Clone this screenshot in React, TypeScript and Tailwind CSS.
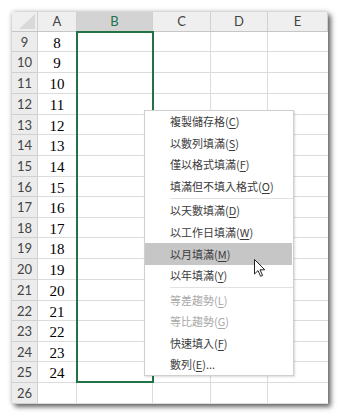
import React from "react";

const rowHeights = [20, 21, 21, 21, 20, 21, 21, 20, 21, 20, 21, 21, 21, 20, 21, 20, 21, 21];
const cols = [
  { w: "w-[39px]", label: "A" },
  { w: "w-[76px]", label: "B" },
  { w: "w-[58px]", label: "C" },
  { w: "w-[57px]", label: "D" },
  { w: "w-[60px]", label: "E" },
];

type Item = { text: string; key: string; tail?: string; h: string; disabled?: boolean; active?: boolean } | { sep: true };

const items: Item[] = [
  { text: "複製儲存格", key: "C", h: "h-[21px]" },
  { text: "以數列填滿", key: "S", h: "h-[22px]" },
  { text: "僅以格式填滿", key: "F", h: "h-[21px]" },
  { text: "填滿但不填入格式", key: "O", h: "h-[22px]" },
  { sep: true },
  { text: "以天數填滿", key: "D", h: "h-[21px]" },
  { text: "以工作日填滿", key: "W", h: "h-[22px]" },
  { text: "以月填滿", key: "M", h: "h-[22px]", active: true },
  { text: "以年填滿", key: "Y", h: "h-[21px]" },
  { sep: true },
  { text: "等差趨勢", key: "L", h: "h-[22px]", disabled: true },
  { text: "等比趨勢", key: "G", h: "h-[21px]", disabled: true },
  { text: "快速填入", key: "F", h: "h-[22px]" },
  { text: "數列", key: "E", tail: "...", h: "h-[21px]" },
];

function rowH(h: number) {
  return h === 20 ? "h-[20px]" : "h-[21px]";
}

export default function App() {
  return (
    <div className="w-[340px] h-[419px] bg-white pt-[12px] pl-[12px]">
      <div className="relative w-[316px] h-[392px] bg-white overflow-hidden shadow-[0_0_5px_rgba(0,0,0,0.25),3px_3px_5px_rgba(0,0,0,0.55)]">
        {/* header row */}
        <div className="flex h-[20px] bg-[#efefef] border-b border-[#c6c6c6]">
          <div className="w-[26px] h-full border-r border-[#d0d0d0] relative flex items-end justify-end pr-[2px] pb-[2px]">
            <svg width="16" height="15" viewBox="0 0 16 15">
              <polygon points="16,0 16,15 0,15" fill="#d9d9d9" />
            </svg>
          </div>
          {cols.map((c) => (
            <div
              key={c.label}
              className={`${c.w} h-full border-r border-[#d0d0d0] flex items-center justify-center text-[13px] ${
                c.label === "B" ? "bg-[#d3d3d3] text-[#217346]" : "text-[#444]"
              }`}
              style={{ fontFamily: "Lato, 'Open Sans', sans-serif" }}
            >
              {c.label}
            </div>
          ))}
        </div>
        {/* rows */}
        {rowHeights.map((h, i) => {
          const n = 9 + i;
          const val = n <= 25 ? String(n - 1) : "";
          return (
            <div key={n} className={`flex ${rowH(h)}`}>
              <div
                className="w-[26px] h-full bg-[#ececec] border-r border-b border-[#d0d0d0] flex items-center justify-center pt-[2px] text-[13px] text-[#444]"
                style={{ fontFamily: "Lato, 'Open Sans', sans-serif" }}
              >
                {n}
              </div>
              <div
                className="w-[39px] h-full border-r border-b border-[#dcdcdc] flex items-center justify-center pt-[3px] text-[15px] text-black"
                style={{ fontFamily: "'Liberation Serif', serif" }}
              >
                {val}
              </div>
              <div className="w-[76px] h-full border-r border-b border-[#dcdcdc]" />
              <div className="w-[58px] h-full border-r border-b border-[#dcdcdc]" />
              <div className="w-[57px] h-full border-r border-b border-[#dcdcdc]" />
              <div className="w-[60px] h-full border-b border-[#dcdcdc]" />
            </div>
          );
        })}

        {/* selection */}
        <div className="absolute left-[64px] top-[19px] w-[78px] h-[352px] border-2 border-[#217346]" />

        {/* context menu */}
        <div
          className="absolute left-[132px] top-[98px] w-[150px] bg-white border border-[#cfcfcf] shadow-[1px_1px_2px_rgba(0,0,0,0.15)] flex flex-col"
          style={{ fontFamily: "'Noto Sans CJK TC', 'Noto Sans', sans-serif" }}
        >
          {items.map((it, i) =>
            "sep" in it ? (
              <div key={i} className="h-[3px] flex items-center pl-[25px]">
                <div className="h-px w-full bg-[#e2e2e2]" />
              </div>
            ) : (
              <div
                key={i}
                className={`${it.h} flex items-center pl-[25px] text-[11px] mr-[1px] ${
                  it.active ? "bg-[#c6c6c6]" : ""
                } ${it.disabled ? "text-[#a8a8a8]" : "text-[#3c3c3c]"}`}
              >
                <span>
                  {it.text}(<span className="underline underline-offset-2">{it.key}</span>){it.tail ?? ""}
                </span>
              </div>
            )
          )}
        </div>

        {/* mouse cursor */}
        <svg className="absolute left-[242px] top-[247px]" width="12" height="18" viewBox="0 0 12 18">
          <path
            d="M0.5 0.5 L0.5 15 L4 11.6 L6.6 17.3 L8.6 16.4 L6 10.8 L10.8 10.8 Z"
            fill="white"
            stroke="#222"
            strokeWidth="1"
            strokeLinejoin="round"
          />
        </svg>
      </div>
    </div>
  );
}
